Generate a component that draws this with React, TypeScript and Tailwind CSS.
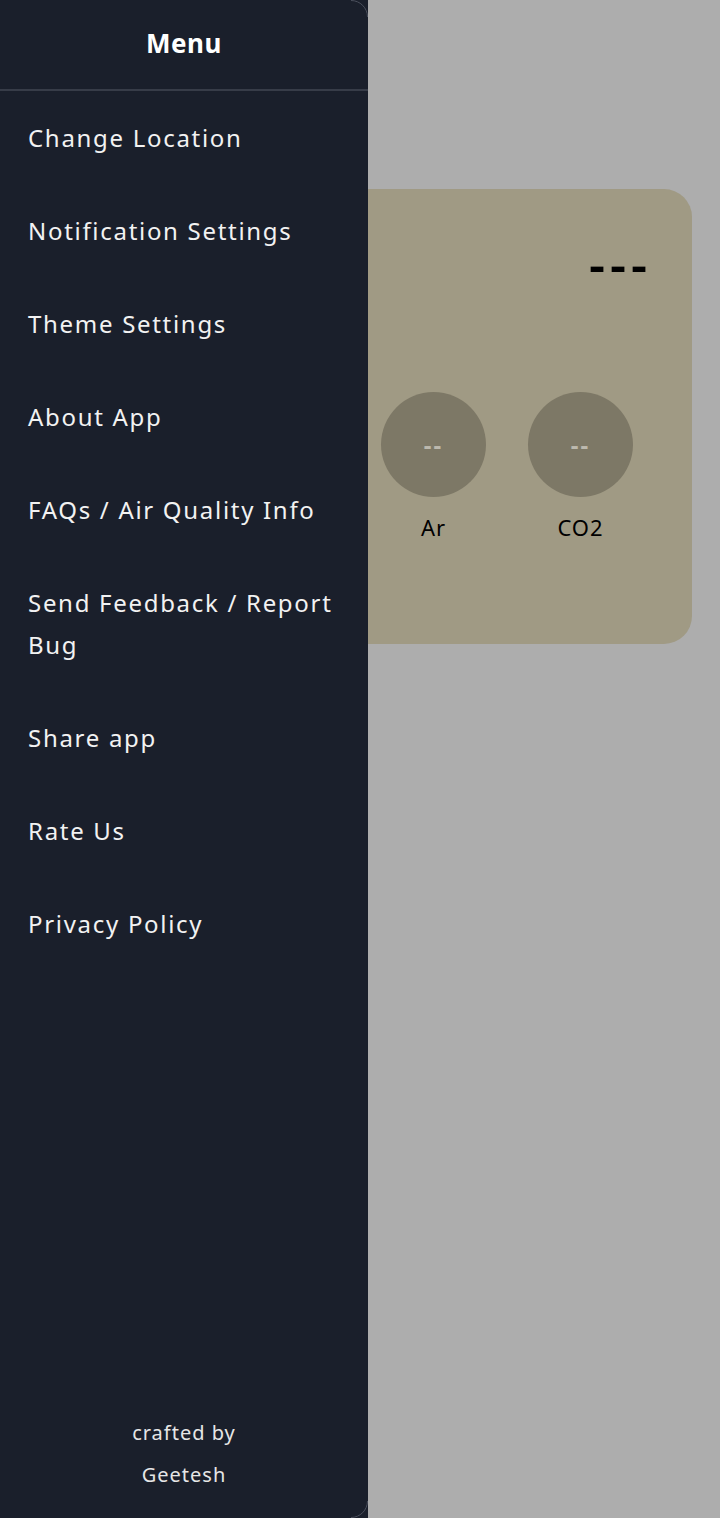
import React from 'react';

const menuItems = [
  'Change Location',
  'Notification Settings',
  'Theme Settings',
  'About App',
  'FAQs / Air Quality Info',
  'Send Feedback / Report Bug',
  'Share app',
  'Rate Us',
  'Privacy Policy',
];

// first two sit under the drawer
const gases = [
  { name: 'PM2.5', hidden: true },
  { name: 'PM10', hidden: true },
  { name: 'Ar', hidden: false },
  { name: 'CO2', hidden: false },
];

const font = { fontFamily: '"Noto Sans", "DejaVu Sans", sans-serif' };

export default function App() {
  return (
    <div className="relative min-h-[1518px] w-[720px] overflow-hidden bg-[#adadad]" style={font}>
      {/* Dimmed page content */}
      <div className="pt-[189px] px-[28px]">
        <div className="h-[455px] rounded-[28px] bg-[#a09a84] flex flex-col">
          <div className="flex justify-end pr-[40px] pt-[40px] h-[203px]">
            <span className="text-[50px] font-semibold leading-[70px] tracking-[5px] text-black">---</span>
          </div>
          <div className="flex justify-center gap-[42px]">
            {gases.map(g => (
              <div key={g.name} className="flex flex-col items-center">
                <div className="w-[105px] h-[105px] rounded-full bg-[#7d7866] flex items-center justify-center">
                  <span className={`text-[24px] font-bold text-[#bcb9ae] tracking-[2px] ${g.hidden ? 'invisible' : ''}`}>--</span>
                </div>
                <span className={`mt-[14px] text-[22px] leading-[32px] tracking-[1px] text-black ${g.hidden ? 'invisible' : ''}`}>{g.name}</span>
              </div>
            ))}
          </div>
        </div>
      </div>

      {/* Drawer */}
      <aside className="absolute left-0 top-0 w-[368px] h-[1518px] bg-[#1a1f2b] flex flex-col">
        <svg className="absolute right-0 top-0" width="18" height="18" viewBox="0 0 18 18">
          <path d="M1 0.5 A16.5 16.5 0 0 1 17.5 17" fill="none" stroke="#4a4f5c" strokeWidth="1" />
        </svg>
        <svg className="absolute right-0 bottom-0" width="18" height="18" viewBox="0 0 18 18">
          <path d="M17.5 1 A16.5 16.5 0 0 1 1 17.5" fill="none" stroke="#4a4f5c" strokeWidth="1" />
        </svg>
        <div className="h-[91px] flex items-center justify-center border-b-2 border-[#373c48]">
          <span className="text-[26px] font-bold text-white tracking-[0.5px] -mt-[2px]">Menu</span>
        </div>
        <nav className="flex flex-col">
          {menuItems.map(item => (
            <div key={item} className="pl-7 pr-[16px] pt-[26px] pb-[25px]">
              <span className="text-[24px] leading-[42px] tracking-[1.7px] text-[#f2f2f2]">{item}</span>
            </div>
          ))}
        </nav>
        <div className="mt-auto pb-[22px] flex flex-col items-center text-[20px] leading-[42px] tracking-[1px] text-[#e6e6e6]">
          <span>crafted by</span>
          <span>Geetesh</span>
        </div>
      </aside>
    </div>
  );
}
